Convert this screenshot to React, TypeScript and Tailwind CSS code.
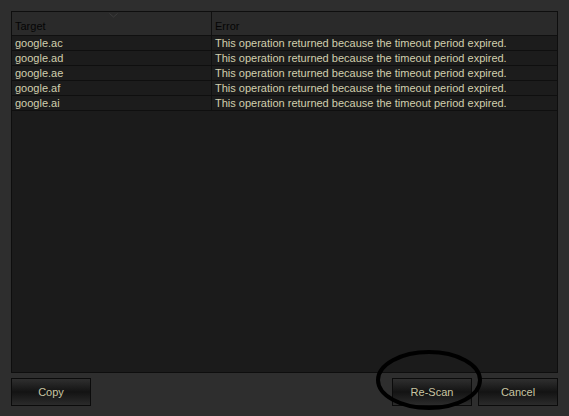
import React from "react";

const rows = ["google.ac", "google.ad", "google.ae", "google.af", "google.ai"];
const msg = "This operation returned because the timeout period expired.";

function Btn({ label }: { label: string }) {
  return (
    <button className="w-[80px] h-[28px] border border-[#0b0b0b] bg-[linear-gradient(to_bottom,#2f2f2f,#131313_50%,#2b2b2b)] text-[#c9c5a2] text-[11px] leading-none">
      {label}
    </button>
  );
}

export default function App() {
  return (
    <div
      className="relative w-[569px] h-[416px] bg-[#2e2e2e] pt-[11px] px-[11px] flex flex-col"
      style={{ fontFamily: '"Liberation Sans", Arial, sans-serif' }}
    >
      <div className="h-[362px] border border-[#0e0e0e] bg-[#1b1b1b] flex flex-col">
        <div className="relative h-[24px] bg-[#2a2a2a] border-b border-[#101010] flex text-[11px] text-[#050505]">
          <div className="w-[200px] border-r border-[#101010] pl-[3px] pt-[6px]">Target</div>
          <div className="flex-1 pl-[3px] pt-[6px]">Error</div>
          <svg className="absolute left-[97px] top-[1px]" width="9" height="5" viewBox="0 0 9 5">
            <path d="M0.5 0.5 L4.5 4 L8.5 0.5" fill="none" stroke="#3c3c3c" strokeWidth="1" />
          </svg>
        </div>
        {rows.map((r) => (
          <div key={r} className="h-[15px] border-b border-[#0f0f0f] flex text-[11px] leading-[14px] text-[#d2cfae] bg-[#1c1c1c]">
            <div className="w-[200px] border-r border-[#101010] pl-[3px]">{r}</div>
            <div className="flex-1 pl-[3px] whitespace-nowrap">{msg}</div>
          </div>
        ))}
      </div>
      <div className="mt-[5px] flex">
        <Btn label="Copy" />
        <div className="flex-1" />
        <Btn label="Re-Scan" />
        <div className="w-[6px]" />
        <Btn label="Cancel" />
      </div>
      <svg className="absolute left-[375px] top-[349px] pointer-events-none" width="108" height="62" viewBox="0 0 108 62">
        <ellipse cx="54" cy="31" rx="51" ry="28" fill="none" stroke="#000" strokeWidth="4" />
      </svg>
    </div>
  );
}
